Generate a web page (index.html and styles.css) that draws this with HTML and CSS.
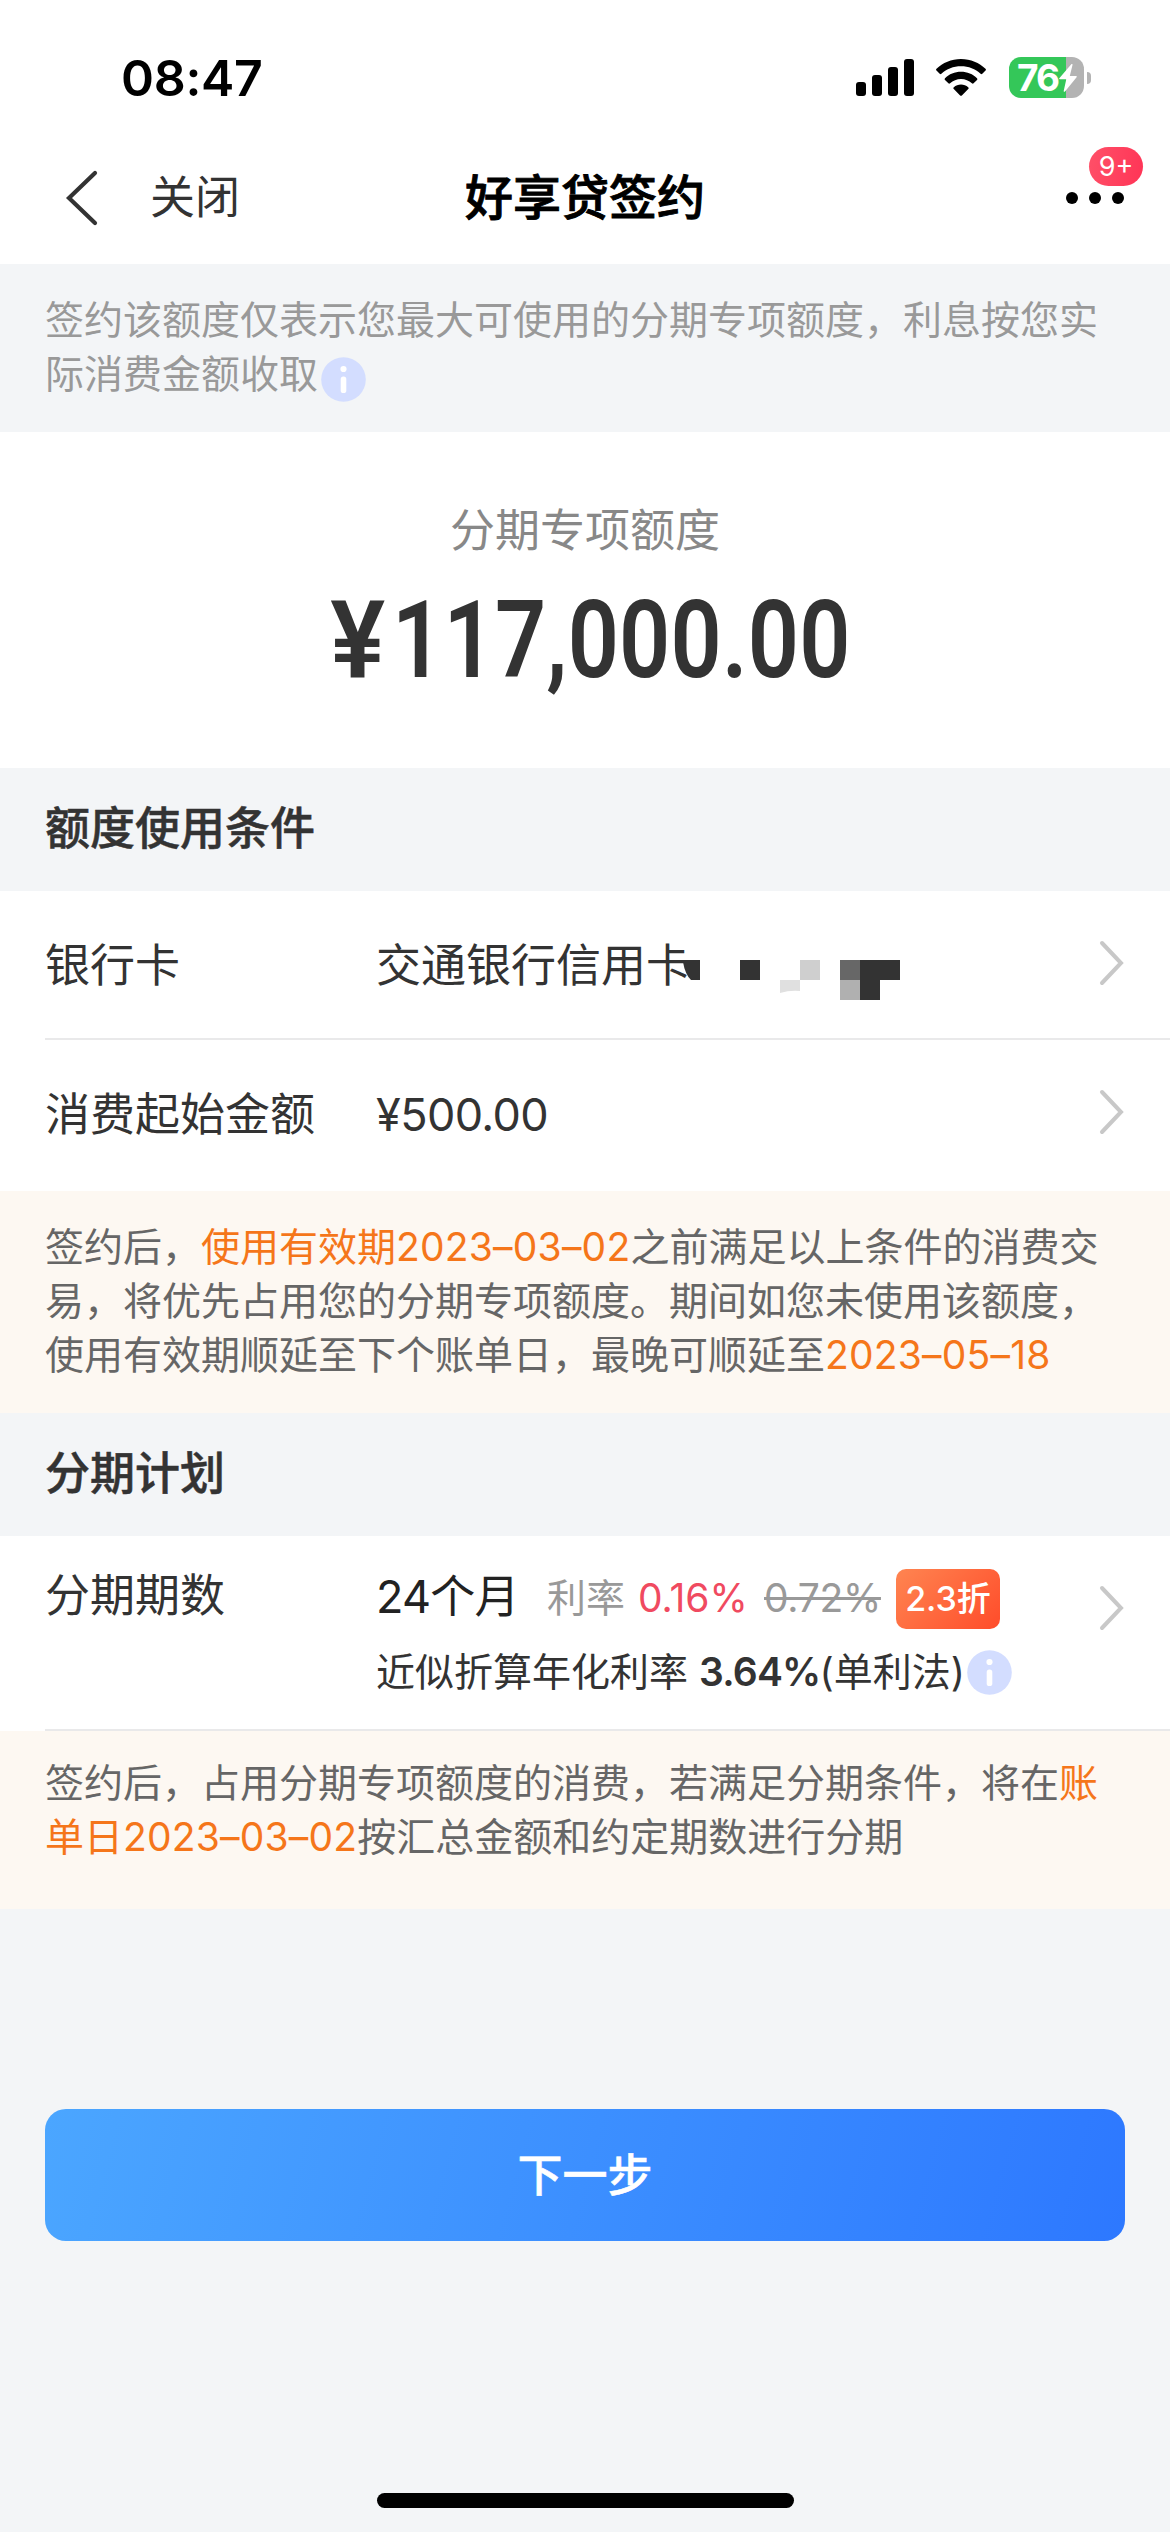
FILE: index.html
```html
<!DOCTYPE html>
<html lang="zh-CN">
<head>
<meta charset="utf-8">
<title>好享贷签约</title>
<link rel="stylesheet" href="styles.css">
</head>
<body>
<svg class="defs" width="0" height="0" aria-hidden="true">
  <symbol id="info" viewBox="0 0 45 45">
    <circle cx="22.5" cy="22.5" r="22.3" fill="#d3ddff"/>
    <circle cx="22.5" cy="12" r="3.1" fill="#fff"/>
    <rect x="19.7" y="19.5" width="5.6" height="16.5" rx="2.6" fill="#fff"/>
  </symbol>
  <symbol id="chevron" viewBox="0 0 26 46">
    <path d="M3 3 L22 23 L3 43" fill="none" stroke="#c8c8c8" stroke-width="4" stroke-linecap="round"/>
  </symbol>
</svg>

<header class="top">
  <div class="status">
    <span class="time">08:47</span>
    <div class="status-icons">
      <svg class="signal" viewBox="0 0 58 37">
        <rect x="0" y="23" width="10" height="14" rx="3"/>
        <rect x="16" y="16" width="10" height="21" rx="3"/>
        <rect x="32" y="8" width="10" height="29" rx="3"/>
        <rect x="48" y="0" width="10" height="37" rx="3"/>
      </svg>
      <svg class="wifi" viewBox="0 0 50 37">
        <path d="M25 0C34.600 0 43.400 3.800 49.500 9.800Q50.400 10.700 49.500 11.600L46.300 14.800Q45.500 15.500 44.600 14.700C39.400 9.800 32.600 7.200 25 7.200S10.600 9.800 5.400 14.700Q4.500 15.500 3.700 14.800L.5 11.600Q-.4 10.700.5 9.800C6.600 3.800 15.400 0 25 0Z"/>
        <path d="M25 12.800C31.200 12.800 36.900 15.200 41 19.200Q41.900 20.100 41 21L37.600 24.300Q36.800 25 35.900 24.200C33 21.700 29.200 20 25 20S17 21.700 14.100 24.200Q13.200 25 12.400 24.300L9 21Q8.100 20.100 9 19.200C13.100 15.200 18.800 12.800 25 12.800Z"/>
        <path d="M25 25.600C27.700 25.600 30.300 26.600 32.200 28.300Q33.100 29.100 32.200 30L25.900 36.400Q25 37.200 24.100 36.400L17.800 30Q16.900 29.100 17.800 28.300C19.700 26.600 22.300 25.600 25 25.600Z"/>
      </svg>
      <div class="battery">
        <span class="battery-body">
          <span class="battery-level">76</span>
          <svg class="bolt" viewBox="0 0 18 28"><path d="M12.500 0L.3 14.300Q-.3 15.200.9 15.300H7.300L4.700 27Q4.800 28.400 6 27.500L17.600 13.200Q18.300 12.200 17 12.100H10.800L13.500 1Q13.600-.6 12.500 0Z" fill="#fff"/></svg>
        </span>
        <span class="battery-cap"></span>
      </div>
    </div>
  </div>
  <nav class="nav">
    <div class="nav-left">
      <svg class="back" viewBox="0 0 34 56"><path d="M30 3L4 28L30 53" fill="none" stroke="#333" stroke-width="4.200" stroke-linecap="round" stroke-linejoin="miter"/></svg>
      <span class="close">关闭</span>
    </div>
    <h1 class="title">好享贷签约</h1>
    <div class="more">
      <i></i><i></i><i></i>
      <span class="count">9+</span>
    </div>
  </nav>
</header>

<p class="tip">签约该额度仅表示您最大可使用的分期专项额度，利息按您实<br>际消费金额收取<svg class="info"><use href="#info"/></svg></p>

<section class="quota">
  <div class="quota-label">分期专项额度</div>
  <div class="quota-amount"><span class="amount"><span class="yen">¥</span>117,000.00</span></div>
</section>

<h2 class="heading">额度使用条件</h2>
<section class="list">
  <div class="row card line">
    <span class="label">银行卡</span>
    <span class="value">交通银行信用卡<svg class="mask" viewBox="0 0 217 40">
      <path d="M0 0H17V20H8Q2 14 0 2Z" fill="#333"/>
      <path d="M57 0h20v20h-20zM177 0h40v20h-20v20h-20z" fill="#333"/>
      <path d="M117 0h20v20h-20z" fill="#cfcfcf"/>
      <path d="M97 20h20v11q-10-1-20 2z" fill="#e0e0e0"/>
      <path d="M157 0h20v20h-20z" fill="#676767"/>
      <path d="M157 20h20v20h-20z" fill="#b0b0b0"/>
    </svg></span>
    <svg class="chevron"><use href="#chevron"/></svg>
  </div>
  <div class="row">
    <span class="label">消费起始金额</span>
    <span class="value money">¥500.00</span>
    <svg class="chevron"><use href="#chevron"/></svg>
  </div>
</section>
<p class="note note-usage">签约后，<em>使用有效期<span class="date">2023–03–02</span></em>之前满足以上条件的消费交<br>易，将优先占用您的分期专项额度。期间如您未使用该额度，<br>使用有效期顺延至下个账单日，最晚可顺延至<em><span class="date">2023–05–18</span></em></p>

<h2 class="heading">分期计划</h2>
<section class="list">
  <div class="row plan line">
    <span class="label">分期期数</span>
    <div class="plan-body">
      <div class="plan-main">
        <span class="months">24个月</span>
        <span class="rate-label">利率</span>
        <span class="rate">0.16%</span>
        <span class="rate-old">0.72%</span>
        <span class="discount">2.3折</span>
      </div>
      <div class="plan-sub"><span>近似折算年化利率</span><b>3.64%</b><span>(单利法)</span><svg class="info"><use href="#info"/></svg></div>
    </div>
    <svg class="chevron"><use href="#chevron"/></svg>
  </div>
</section>
<p class="note note-plan">签约后，占用分期专项额度的消费，若满足分期条件，将在<em>账</em><br><em>单日<span class="date">2023–03–02</span></em>按汇总金额和约定期数进行分期</p>

<footer class="actions">
  <button class="next" type="button">下一步</button>
  <div class="home-bar"></div>
</footer>
</body>
</html>
```
FILE: styles.css
```css
* { box-sizing: border-box; }

body {
  margin: 0;
  width: 1170px;
  height: 2532px;
  display: flex;
  flex-direction: column;
  background: #f3f5f7;
  color: #333;
  font-family: Inter, "Noto Sans CJK SC", sans-serif;
  font-size: 45px;
  line-height: 54px;
  white-space: nowrap;
  overflow: hidden;
}

h1, h2, p { margin: 0; font-weight: 400; }
em { font-style: normal; color: #f5761a; }
svg { display: block; flex: none; }
.defs { position: absolute; }

/* status bar and navigation */
.top { height: 264px; background: #fff; }

.status {
  height: 132px;
  padding: 23px 79px 0 121px;
  display: flex;
  justify-content: space-between;
  align-items: center;
  color: #000;
}
.time { font-size: 50px; font-weight: 600; letter-spacing: -.3px; }
.status-icons { display: flex; align-items: center; }
.signal { width: 58px; height: 37px; }
.wifi { width: 50px; height: 37px; margin-left: 22px; }
.battery { display: flex; align-items: center; gap: 3px; margin-left: 23px; }
.battery-body {
  width: 75px;
  height: 41px;
  padding-left: 8px;
  border-radius: 12px;
  display: flex;
  align-items: center;
  background: linear-gradient(90deg, #34c759 57px, #b3b3b3 57px);
}
.battery-level {
  width: 42px;
  color: #fff;
  font-size: 37px;
  font-weight: 700;
  line-height: 41px;
  letter-spacing: -2px;
}
.bolt { width: 18px; height: 28px; }
.battery-cap { width: 4px; height: 12px; border-radius: 0 4px 4px 0; background: #b3b3b3; }

.nav {
  height: 132px;
  padding: 0 46px;
  display: grid;
  grid-template-columns: 1fr auto 1fr;
  align-items: center;
}
.nav-left { display: flex; align-items: center; gap: 51px; padding-left: 19px; }
.back { width: 34px; height: 56px; }
.title { color: #000; font-size: 48px; font-weight: 500; -webkit-text-stroke: .9px; }
.more { position: relative; display: flex; justify-content: flex-end; gap: 11px; }
.more i { width: 12px; height: 12px; border-radius: 50%; background: #000; }
.count {
  position: absolute;
  right: -19px;
  bottom: 18px;
  width: 54px;
  height: 39px;
  border-radius: 20px;
  background: linear-gradient(100deg, #ff5068, #ff3456);
  color: #fff;
  font-size: 27px;
  line-height: 39px;
  text-align: center;
}

/* hint under the navigation */
.tip {
  height: 168px;
  padding: 29px 45px 0;
  color: #999;
  font-size: 39px;
}
.info { width: 45px; height: 45px; }
.tip .info { display: inline-block; margin: 0 0 0 3px; vertical-align: -14px; }

/* quota */
.quota { height: 336px; padding-top: 72px; background: #fff; text-align: center; }
.quota-label { color: #888; }
.quota-amount {
  height: 108px;
  margin-top: 28px;
  padding-left: 14px;
  font: 600 108px/108px Roboto, sans-serif;
}
.amount { display: inline-block; letter-spacing: .3px; transform: scaleX(.83); }
.yen { display: inline-block; margin-right: 12px; transform: scaleX(1.15); }

/* sections */
.heading { height: 123px; padding: 34px 45px 0; font-size: 45px; font-weight: 500; -webkit-text-stroke: .5px; }
.list { background: #fff; }
.row {
  position: relative;
  height: 151px;
  padding: 0 45px 2px;
  display: flex;
  align-items: center;
}
.line::after {
  content: "";
  position: absolute;
  left: 45px;
  right: 0;
  bottom: 0;
  height: 2px;
  background: #e9e9ea;
}
.label { width: 331px; }
.value { flex: 1; display: flex; align-items: center; }
.card { height: 149px; padding-bottom: 0; }
.mask { width: 217px; height: 40px; margin: 28px 0 0 -8px; }
.money { letter-spacing: -.6px; }
.chevron { width: 26px; height: 46px; margin-bottom: 5px; }

/* notes */
.note { background: #fdf8f2; color: #666; font-size: 39px; padding: 0 45px; }
.note-usage { height: 222px; padding-top: 29px; }
.note-plan { height: 178px; padding-top: 25px; }
.date { letter-spacing: .2px; }

/* instalment plan */
.plan { height: 195px; padding-top: 33px; align-items: flex-start; }
.plan-body { flex: 1; }
.plan-main { display: flex; align-items: center; height: 60px; }
.plan .chevron { margin-top: 16px; }
.months { width: 171px; margin-bottom: 5px; color: #222; letter-spacing: -.8px; }
.rate-label, .rate, .rate-old { margin-bottom: 3px; font-size: 39px; }
.rate-label { width: 91px; color: #999; }
.rate { width: 126px; color: #f04a60; }
.rate-old { color: #999; letter-spacing: -.3px; text-decoration: line-through; }
.discount {
  width: 104px;
  height: 60px;
  margin-left: auto;
  margin-right: 99px;
  border-radius: 10px;
  background: linear-gradient(135deg, #ff8551, #ff4c2a);
  color: #fff;
  font-size: 34px;
  font-weight: 500;
  line-height: 60px;
  text-align: center;
}
.plan-sub { display: flex; align-items: center; height: 54px; margin-top: 16px; font-size: 39px; }
.plan-sub b { margin: 0 -1px 0 11px; font-weight: 600; letter-spacing: -.8px; }
.plan-sub .info { margin-left: 2px; }

/* bottom action */
.actions {
  flex: 1;
  padding: 200px 45px 24px;
  display: flex;
  flex-direction: column;
  justify-content: space-between;
  align-items: center;
}
.next {
  width: 1080px;
  height: 132px;
  border: 0;
  border-radius: 21px;
  background: linear-gradient(105deg, #4ba6ff, #2d78ff);
  color: #fff;
  font: 500 45px/132px Inter, "Noto Sans CJK SC", sans-serif;
  -webkit-text-stroke: .5px;
}
.home-bar { width: 417px; height: 15px; border-radius: 8px; background: #000; }
```
